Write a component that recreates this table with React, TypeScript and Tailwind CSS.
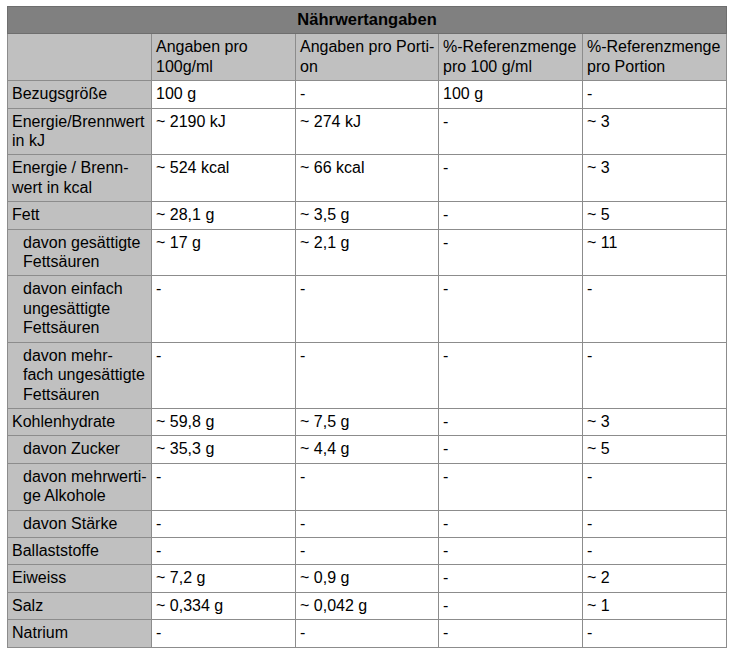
import React from "react";

type Row = { label: string[]; indent?: boolean; values: string[] };

const header = [
  [],
  ["Angaben pro", "100g/ml"],
  ["Angaben pro Porti-", "on"],
  ["%-Referenzmenge", "pro 100 g/ml"],
  ["%-Referenzmenge", "pro Portion"],
];

const rows: Row[] = [
  { label: ["Bezugsgröße"], values: ["100 g", "-", "100 g", "-"] },
  { label: ["Energie/Brennwert", "in kJ"], values: ["~ 2190 kJ", "~ 274 kJ", "-", "~ 3"] },
  { label: ["Energie / Brenn-", "wert in kcal"], values: ["~ 524 kcal", "~ 66 kcal", "-", "~ 3"] },
  { label: ["Fett"], values: ["~ 28,1 g", "~ 3,5 g", "-", "~ 5"] },
  { label: ["davon gesättigte", "Fettsäuren"], indent: true, values: ["~ 17 g", "~ 2,1 g", "-", "~ 11"] },
  { label: ["davon einfach", "ungesättigte", "Fettsäuren"], indent: true, values: ["-", "-", "-", "-"] },
  { label: ["davon mehr-", "fach ungesättigte", "Fettsäuren"], indent: true, values: ["-", "-", "-", "-"] },
  { label: ["Kohlenhydrate"], values: ["~ 59,8 g", "~ 7,5 g", "-", "~ 3"] },
  { label: ["davon Zucker"], indent: true, values: ["~ 35,3 g", "~ 4,4 g", "-", "~ 5"] },
  { label: ["davon mehrwerti-", "ge Alkohole"], indent: true, values: ["-", "-", "-", "-"] },
  { label: ["davon Stärke"], indent: true, values: ["-", "-", "-", "-"] },
  { label: ["Ballaststoffe"], values: ["-", "-", "-", "-"] },
  { label: ["Eiweiss"], values: ["~ 7,2 g", "~ 0,9 g", "-", "~ 2"] },
  { label: ["Salz"], values: ["~ 0,334 g", "~ 0,042 g", "-", "~ 1"] },
  { label: ["Natrium"], values: ["-", "-", "-", "-"] },
];

function Lines({ lines }: { lines: string[] }) {
  return (
    <>
      {lines.map((l, i) => (
        <div key={i} className="whitespace-nowrap">
          {l}
        </div>
      ))}
    </>
  );
}

const cell = "border border-[#8c8c8c] align-top pt-[3px] pb-[4px] pr-[2px] text-left font-normal";

export default function App() {
  return (
    <div className="min-h-[652px] bg-white pl-[7px] pt-[6px] text-[16px] leading-[19.4px] text-black [font-family:'Liberation_Sans',Arial,sans-serif]">
      <table className="w-[719px] table-fixed border-collapse">
        <colgroup>
          <col className="w-[144px]" />
          <col className="w-[144px]" />
          <col className="w-[143px]" />
          <col className="w-[144px]" />
          <col className="w-[144px]" />
        </colgroup>
        <thead>
          <tr>
            <th colSpan={5} className="border border-[#6e6e6e] bg-[#808080] pt-[3px] pb-[4px] text-center text-[16.5px] font-bold">
              Nährwertangaben
            </th>
          </tr>
          <tr className="bg-[#c0c0c0]">
            {header.map((h, i) => (
              <th key={i} className={`${cell} pl-[4px]`}>
                <Lines lines={h} />
              </th>
            ))}
          </tr>
        </thead>
        <tbody>
          {rows.map((r, i) => (
            <tr key={i}>
              <td className={`${cell} bg-[#c0c0c0] ${r.indent ? "pl-[15px]" : "pl-[4px]"}`}>
                <Lines lines={r.label} />
              </td>
              {r.values.map((v, j) => (
                <td key={j} className={`${cell} bg-white pl-[4px]`}>
                  {v}
                </td>
              ))}
            </tr>
          ))}
        </tbody>
      </table>
    </div>
  );
}
